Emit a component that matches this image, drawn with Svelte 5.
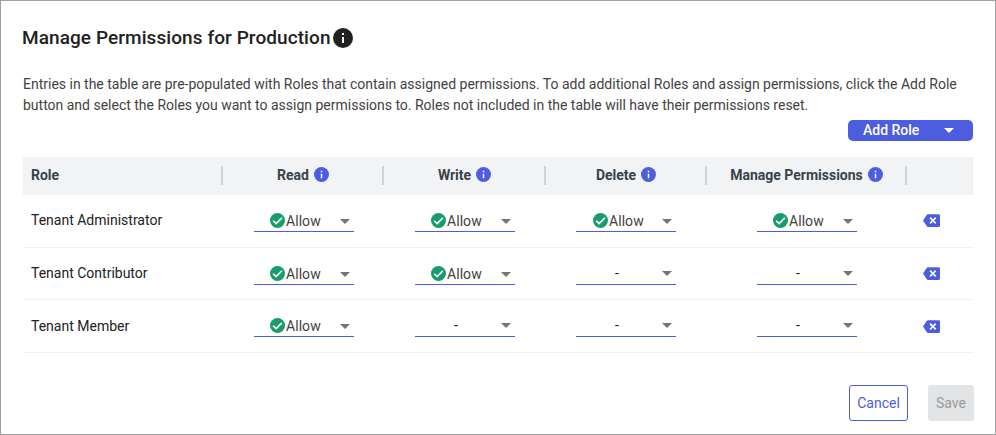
<script>
  const columns = ['Read', 'Write', 'Delete', 'Manage Permissions'];

  const roles = [
    { name: 'Tenant Administrator', access: [true, true, true, true] },
    { name: 'Tenant Contributor', access: [true, true, false, false] },
    { name: 'Tenant Member', access: [true, false, false, false] }
  ];
</script>

{#snippet info()}
  <svg class="info" viewBox="2 2 20 20" aria-hidden="true">
    <circle cx="12" cy="12" r="10" />
    <path d="M11 7h2v2h-2zM11 11h2v6h-2z" />
  </svg>
{/snippet}

{#snippet caret()}
  <svg class="caret" viewBox="0 0 10 5" aria-hidden="true"><path d="M0 0h10L5 5z" /></svg>
{/snippet}

<main class="dialog">
  <h1><span>Manage Permissions for Production</span>{@render info()}</h1>

  <p>
    <span>Entries in the table are pre-populated with Roles that contain assigned permissions. To add additional Roles and assign permissions, click the Add Role</span><br />
    <span>button and select the Roles you want to assign permissions to. Roles not included in the table will have their permissions reset.</span>
  </p>

  <div class="toolbar">
    <button class="add"><span>Add Role</span>{@render caret()}</button>
  </div>

  <section class="table">
    <div class="grid head">
      <div class="cell role"><span>Role</span></div>
      {#each columns as column}
        <div class="cell"><span>{column}</span>{@render info()}</div>
      {/each}
      <div></div>
    </div>
    {#each roles as role}
      <div class="grid row">
        <div class="name"><span>{role.name}</span></div>
        {#each role.access as allowed}
          <div class="field">
            <div class="select" class:unset={!allowed}>
              <span class="value">
                {#if allowed}
                  <svg class="check" viewBox="2 2 20 20" aria-hidden="true">
                    <circle cx="12" cy="12" r="10" />
                    <path d="M6.200 12.300l4 3.900 7.600-7.700" />
                  </svg><span class="allow">Allow</span>
                {:else}
                  <span class="dash">-</span>
                {/if}
              </span>
              {@render caret()}
            </div>
          </div>
        {/each}
        <button class="remove" aria-label="Remove role">
          <svg viewBox="0 3 24 18" aria-hidden="true">
            <path class="tag" d="M22 3H7c-.69 0-1.230.350-1.590.880L0 12l5.410 8.110c.36.530.9.890 1.590.890h15c1.100 0 2-.9 2-2V5c0-1.100-.9-2-2-2z" />
            <path class="cross" d="M10 8l8 8M18 8l-8 8" />
          </svg>
        </button>
      </div>
    {/each}
  </section>

  <footer>
    <button class="cancel"><span>Cancel</span></button>
    <button class="save" disabled><span>Save</span></button>
  </footer>
</main>

<style>
  :global(body) { background: #fff; }
  .dialog {
    box-sizing: border-box;
    width: 996px;
    height: 435px;
    padding: 25px 22px 0;
    border: 1px solid #a0a0a0;
    background: #fff;
    color: #212121;
    font: 14px/20px Roboto, sans-serif;
    overflow: hidden;
  }
  button { margin: 0; padding: 0; border: 0; font: inherit; box-sizing: border-box; }
  svg { display: block; flex: none; }
  h1 {
    display: flex;
    align-items: center;
    height: 24px;
    margin: 0;
    font-size: 19px;
    font-weight: 500;
    line-height: 24px;
    letter-spacing: 0.08px;
    white-space: nowrap;
  }
  h1 span { width: 309px; margin-left: -1px; }
  h1 .info { width: 20px; height: 20px; margin-left: 2px; }
  .info circle { fill: #4d5ddf; }
  .info path { fill: #fff; }
  h1 .info circle { fill: #212121; }
  p {
    height: 42px;
    margin: 24px 0 0;
    line-height: 21px;
    letter-spacing: -0.005px;
    color: #424242;
    white-space: nowrap;
  }
  .toolbar { display: flex; justify-content: flex-end; margin-top: 4px; }
  .add {
    display: flex;
    align-items: center;
    justify-content: space-between;
    width: 125px;
    height: 21px;
    padding: 0 19px 1px 15px;
    border-radius: 5px;
    background: #4d5ddf;
    color: #fff;
    font-weight: 500;
  }
  .caret { width: 10px; height: 5px; fill: #757575; }
  .add .caret { fill: #fff; }
  .table { width: 950px; margin-top: 16px; }
  .grid {
    display: grid;
    grid-template-columns: 200px 161px 162px 161px 200px 66px;
  }
  .head {
    box-sizing: border-box;
    height: 38px;
    padding-top: 9px;
    background: #f2f3f5;
    color: #37424a;
    font-weight: 700;
  }
  .cell {
    display: flex;
    align-items: center;
    justify-content: center;
    box-sizing: border-box;
    height: 19px;
    padding: 0 0 2px 1px;
    border-right: 2px solid #d2d4d6;
    white-space: nowrap;
  }
  .cell span { padding-top: 1px; }
  .cell .info { width: 15px; height: 15px; margin-left: 5px; }
  .cell.role { justify-content: flex-start; padding-left: 8px; }
  .row {
    box-sizing: border-box;
    height: 53px;
    border-bottom: 1px solid #f0f1f3;
  }
  .row:nth-child(3) { height: 52px; }
  .name { padding: 15px 0 0 8px; }
  .field { display: flex; justify-content: flex-start; align-items: flex-start; padding: 14px 0 0 31px; }
  .field:nth-child(4) { padding-left: 30px; }
  .field:nth-child(4) .check { margin-left: 1px; }
  .field:nth-child(5) { padding-left: 50px; }
  .select {
    display: flex;
    align-items: center;
    box-sizing: border-box;
    width: 100px;
    height: 23px;
    padding: 0 4px 0 16px;
    border-bottom: 1px solid #4d5ddf;
    color: #424242;
  }
  .select .caret { margin-top: 2px; }
  .select.unset .caret { margin-top: 0; }
  .value { display: flex; align-items: center; flex: 1; }
  .check { width: 15px; height: 15px; margin-right: 1px; }
  .check circle { fill: #179c6e; }
  .check path { fill: none; stroke: #fff; stroke-width: 2.200; }
  .allow { padding-top: 2px; letter-spacing: 0.05px; }
  .dash { margin-left: 23px; color: #212121; }
  .remove { display: flex; width: 17px; height: 13px; margin: 19px 0 0 16px; background: none; }
  .row:last-child .name { padding-top: 16px; }
  .row:last-child .remove { margin-top: 20px; }
  .remove svg { width: 17px; height: 13px; }
  .tag { fill: #4d5ddf; }
  .cross { fill: none; stroke: #fff; stroke-width: 2.200; }
  footer { display: flex; justify-content: flex-end; gap: 20px; margin: 32px -1px 0 0; }
  footer button { height: 36px; border-radius: 3px; }
  .cancel { width: 59px; border: 1px solid #4d5ddf; background: #fff; color: #4d5ddf; }
  .save { width: 46px; background: #e2e4e6; color: #979a9d; }
</style>
